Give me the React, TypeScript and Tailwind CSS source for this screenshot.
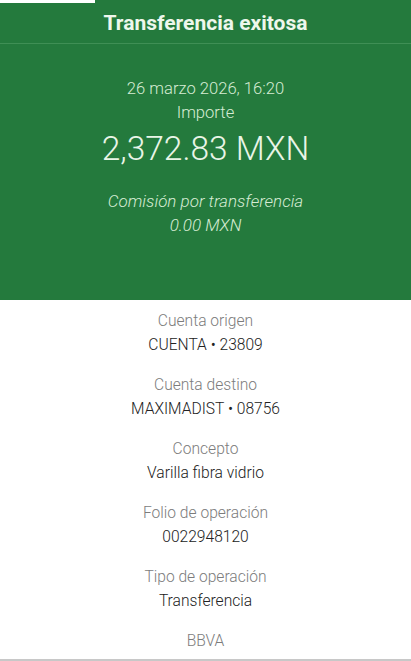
const details = [
  { label: "Cuenta origen", value: "CUENTA • 23809" },
  { label: "Cuenta destino", value: "MAXIMADIST • 08756" },
  { label: "Concepto", value: "Varilla fibra vidrio" },
  { label: "Folio de operación", value: "0022948120" },
  { label: "Tipo de operación", value: "Transferencia" },
];

const App = () => {
  return (
    <div className="w-[411px] h-[661px] bg-white flex flex-col font-['Roboto',sans-serif] overflow-hidden">
      <section className="bg-[#247a3d] h-[300px] flex flex-col shrink-0">
        <div className="h-[3px] w-[95px] bg-white" />
        <div className="h-[40px] flex items-center justify-center">
          <h1 className="text-[21px] font-bold text-[#eef7ec] leading-none">
            Transferencia exitosa
          </h1>
        </div>
        <div className="h-px bg-[#3f8f55]" />
        <div className="flex flex-col items-center pt-[33px] text-[#d6ecd4]">
          <p className="text-[16.6px] leading-[24px] font-light">26 marzo 2026, 16:20</p>
          <p className="text-[16.6px] leading-[24px] font-light">Importe</p>
          <p className="text-[33.5px] leading-[44px] text-[#e9f5e7] font-light mt-[2px]">
            2,372.83 MXN
          </p>
          <p className="text-[17px] leading-[24px] italic font-light mt-[18px]">
            Comisión por transferencia
          </p>
          <p className="text-[17px] leading-[24px] italic font-light">0.00 MXN</p>
        </div>
      </section>
      <section className="flex-1 flex flex-col items-center pt-[9px] gap-4">
        {details.map((d) => (
          <div key={d.label} className="flex flex-col items-center">
            <span className="text-[15.6px] leading-[24px] text-[#7c7c7c] font-light">
              {d.label}
            </span>
            <span className="text-[15.6px] leading-[24px] text-[#222222] font-light">
              {d.value}
            </span>
          </div>
        ))}
        <span className="text-[15.6px] leading-[24px] text-[#7c7c7c] font-light">BBVA</span>
      </section>
      <div className="h-[2px] bg-[#c8c8c8] shrink-0" />
    </div>
  );
};

export default App;
